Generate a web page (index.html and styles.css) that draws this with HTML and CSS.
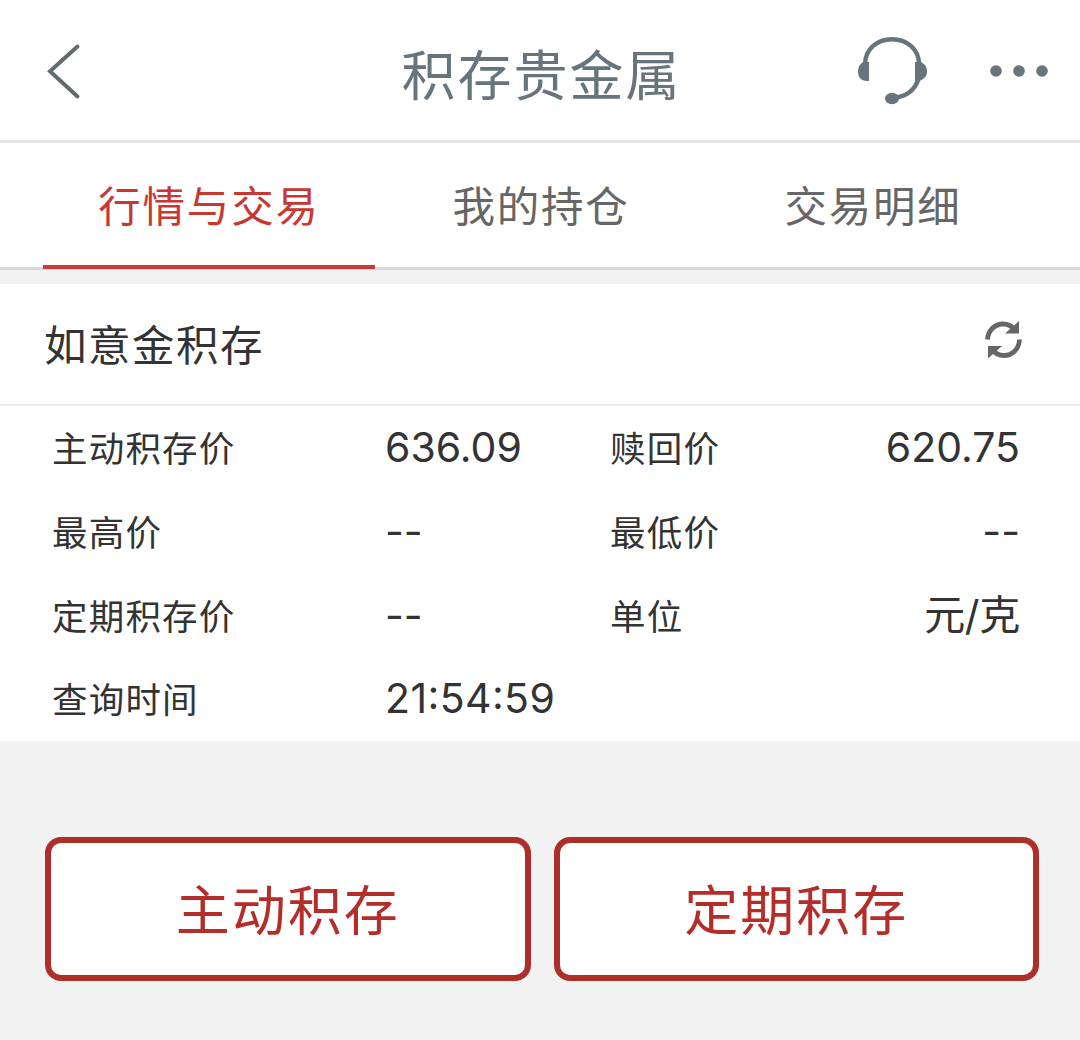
FILE: index.html
```html
<!DOCTYPE html>
<html lang="zh-CN">
<head>
<meta charset="UTF-8">
<title>积存贵金属</title>
<link rel="stylesheet" href="styles.css">
</head>
<body>
<header class="navbar">
  <a class="nav-back" aria-label="返回">
    <svg width="40" height="60" viewBox="0 0 40 60"><path d="M33.5 6.500 6 31.200 33.500 56.500" fill="none" stroke="currentColor" stroke-width="4" stroke-linecap="round"/></svg>
  </a>
  <h1 class="nav-title">积存贵金属</h1>
  <div class="nav-actions">
    <svg width="72" height="72" viewBox="0 0 72 72">
      <path d="M9 30C9.500 15 21 5.200 36 5.200S62.500 15 63.200 30M62.500 45C59 55 51 62 40 63.500" fill="none" stroke="currentColor" stroke-width="4.400"/>
      <path d="M7 28H13V47H11C5 47 2 43 2 37.500 2 33 4 30 7 28ZM65 28H59V47H62C68 46 71 42 71 37.500 71 33 69 30 65 28Z" fill="currentColor"/>
      <ellipse cx="36" cy="64.500" rx="7" ry="5.800" fill="currentColor"/>
    </svg>
    <svg class="more" width="60" height="14" viewBox="0 0 60 14" fill="currentColor"><circle cx="7" cy="7" r="5.800"/><circle cx="30" cy="7" r="5.800"/><circle cx="53" cy="7" r="5.800"/></svg>
  </div>
</header>
<nav class="tabs">
  <a class="tab active">行情与交易</a>
  <a class="tab">我的持仓</a>
  <a class="tab">交易明细</a>
</nav>
<section class="panel">
  <div class="panel-head">
    <h2 class="panel-title">如意金积存</h2>
    <svg class="refresh" width="38" height="40" viewBox="0 0 38 40">
      <path d="M3.500 19.500C4 10 11 4 19 4 24 4 28 6 31 10M35.500 19.500C35 29.500 28 35.500 20 35.500 15 35.500 11 33.500 8 29.500" fill="none" stroke="currentColor" stroke-width="4.800"/>
      <path d="M35 1V13.500H21L26 9ZM4 38.500V26H18L13 30.500Z" fill="currentColor"/>
    </svg>
  </div>
  <dl class="quotes">
    <dt>主动积存价</dt><dd>636.09</dd>
    <dt>赎回价</dt><dd class="end">620.75</dd>
    <dt>最高价</dt><dd>--</dd>
    <dt>最低价</dt><dd class="end">--</dd>
    <dt>定期积存价</dt><dd>--</dd>
    <dt>单位</dt><dd class="end unit">元/克</dd>
    <dt>查询时间</dt><dd class="time">21:54:59</dd>
  </dl>
</section>
<div class="actions">
  <button class="btn">主动积存</button>
  <button class="btn">定期积存</button>
</div>
</body>
</html>
```
FILE: styles.css
```css
* { box-sizing: border-box; }
body {
  margin: 0;
  min-height: 1040px;
  background: #f2f2f2;
  color: #333;
  font-family: Inter, "Noto Sans CJK SC", sans-serif;
}
svg { display: block; }
h1, h2, dl, dd { margin: 0; font-weight: 400; }
.navbar {
  display: grid;
  grid-template-columns: 300px 1fr 300px;
  align-items: center;
  height: 143px;
  background: #fff;
  border-bottom: 3px solid #e4e4e4;
  color: #66747c;
}
.nav-back { padding-left: 44px; color: #626b70; }
.nav-title {
  font-size: 54px;
  line-height: 80px;
  letter-spacing: 2px;
  text-align: center;
  padding: 13px 0 0 3px;
}
.nav-actions {
  display: flex;
  align-items: center;
  justify-content: flex-end;
  gap: 61px;
  padding-right: 31px;
}
.more { margin-top: 2px; color: #68757b; }
.tabs {
  display: grid;
  grid-template-columns: repeat(3, 1fr);
  height: 127px;
  padding: 0 41px 0 43px;
  background: #fff;
  border-bottom: 3px solid #d8d8d8;
}
.tab {
  height: 126px;
  border-bottom: 4px solid transparent;
  font-size: 42.5px;
  line-height: 128px;
  letter-spacing: 1.8px;
  text-align: center;
  color: #666;
}
.tab.active { border-color: #c73a36; color: #c83732; }
.panel { margin-top: 14px; background: #fff; }
.panel-head {
  display: flex;
  align-items: center;
  justify-content: space-between;
  height: 122px;
  padding: 0 58px 0 44px;
  border-bottom: 2px solid #ededed;
}
.panel-title {
  padding-top: 3px;
  font-size: 42.5px;
  line-height: 120px;
  letter-spacing: 1.5px;
}
.refresh { margin-bottom: 9px; color: #666; }
.quotes {
  display: grid;
  grid-template-columns: 333px 225px 190px 1fr;
  grid-auto-rows: 83.75px;
  height: 335px;
  padding: 0 60px 0 52px;
  line-height: 84px;
}
.quotes dt { padding-top: 2px; font-size: 35.5px; letter-spacing: 1.2px; }
.quotes dd { font-size: 41px; line-height: 82px; }
.quotes .end { text-align: right; }
.quotes .unit { letter-spacing: -0.3px; }
.quotes .time { letter-spacing: 0.4px; font-feature-settings: "case"; }
.actions {
  display: grid;
  grid-template-columns: 1fr 1fr;
  gap: 23px;
  padding: 96px 41px 0 45px;
}
.btn {
  height: 144px;
  padding: 0 0 4px;
  border: 6px solid #ae2e29;
  border-radius: 16px;
  background: #fff;
  color: #b52d28;
  font: inherit;
  font-size: 54px;
  letter-spacing: 2px;
}
```
